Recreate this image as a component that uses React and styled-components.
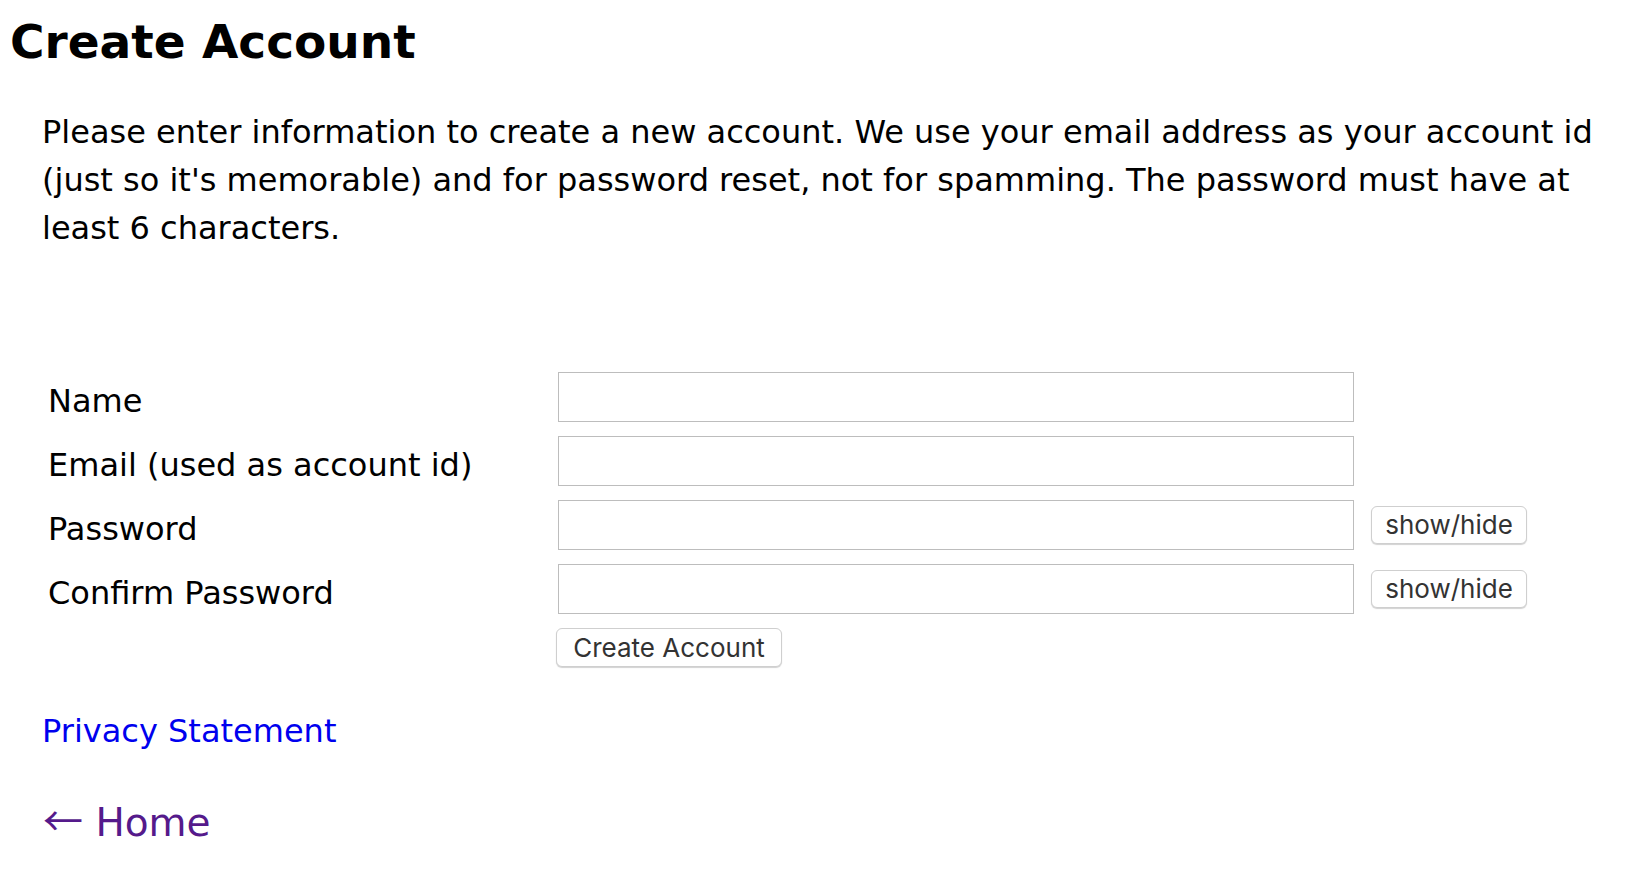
import React, { useState } from "react";
import styled, { createGlobalStyle } from "styled-components";

const GlobalStyle = createGlobalStyle`
  html, body {
    margin: 0;
    padding: 0;
    background: #fff;
  }
  body {
    font-family: "DejaVu Sans", Verdana, sans-serif;
    color: #000;
  }
`;

function App() {
  const [showPw, setShowPw] = useState(false);
  const [showConfirm, setShowConfirm] = useState(false);

  return (
    <Page>
      <GlobalStyle />
      <Title>Create Account</Title>
      <Intro>
        Please enter information to create a new account. We use your email address as your
        account id (just so it's memorable) and for password reset, not for spamming. The
        password must have at least 6 characters.
      </Intro>

      <Form onSubmit={(e) => e.preventDefault()}>
        <Label htmlFor="name">Name</Label>
        <Field id="name" type="text" />
        <span />

        <Label htmlFor="email">Email (used as account id)</Label>
        <Field id="email" type="email" />
        <span />

        <Label htmlFor="pw">Password</Label>
        <Field id="pw" type={showPw ? "text" : "password"} />
        <Button type="button" width={156} onClick={() => setShowPw(!showPw)}>
          show/hide
        </Button>

        <Label htmlFor="pw2">Confirm Password</Label>
        <Field id="pw2" type={showConfirm ? "text" : "password"} />
        <Button type="button" width={156} onClick={() => setShowConfirm(!showConfirm)}>
          show/hide
        </Button>

        <span />
        <Submit type="submit" width={226}>
          Create Account
        </Submit>
      </Form>

      <Privacy href="#privacy">Privacy Statement</Privacy>
      <HomeLink href="#home">
        <Arrow>←</Arrow> Home
      </HomeLink>
    </Page>
  );
}

const Page = styled.div`
  padding: 8px 0 40px 8px;
`;

const Title = styled.h1`
  margin: 6px 0 0 2px;
  font-size: 47px;
  line-height: 56px;
  font-weight: bold;
`;

const Intro = styled.p`
  margin: 38px 20px 0 34px;
  font-size: 32px;
  line-height: 48px;
`;

const Form = styled.form`
  display: grid;
  grid-template-columns: 493px 796px auto;
  column-gap: 17px;
  row-gap: 14px;
  align-items: center;
  margin: 120px 0 0 40px;
`;

const Label = styled.label`
  align-self: stretch;
  padding-top: 8px;
  font-size: 32px;
  line-height: 42px;
  white-space: nowrap;
`;

const Field = styled.input`
  box-sizing: border-box;
  width: 796px;
  height: 50px;
  margin: 0;
  border: 1px solid #bdbdbd;
  border-radius: 0;
  background: #fff;
  font-size: 28px;
  padding: 0 8px;
  outline: none;
`;

const Button = styled.button`
  box-sizing: border-box;
  justify-self: start;
  width: ${(p) => p.width}px;
  height: 38px;
  padding: 0;
  border: 1px solid #cfcfcf;
  border-radius: 6px;
  background: #fff;
  box-shadow: 0 1px 1px rgba(0, 0, 0, 0.18);
  color: #333;
  font-family: Inter, "Liberation Sans", sans-serif;
  font-size: 26px;
  line-height: 1;
  cursor: pointer;
`;

const Submit = styled(Button)`
  height: 39px;
  margin-left: -2px;
`;

const Privacy = styled.a`
  display: block;
  width: fit-content;
  margin: 45px 0 0 34px;
  color: #0000ee;
  text-decoration: none;
  font-size: 32px;
`;

const HomeLink = styled.a`
  display: block;
  width: fit-content;
  margin: 46px 0 0 35px;
  color: #551a8b;
  text-decoration: none;
  font-size: 39px;
  line-height: 47px;
`;

const Arrow = styled.span`
  font-family: "Noto Sans CJK JP", "DejaVu Sans", sans-serif;
  font-size: 40px;
`;

export default App;
